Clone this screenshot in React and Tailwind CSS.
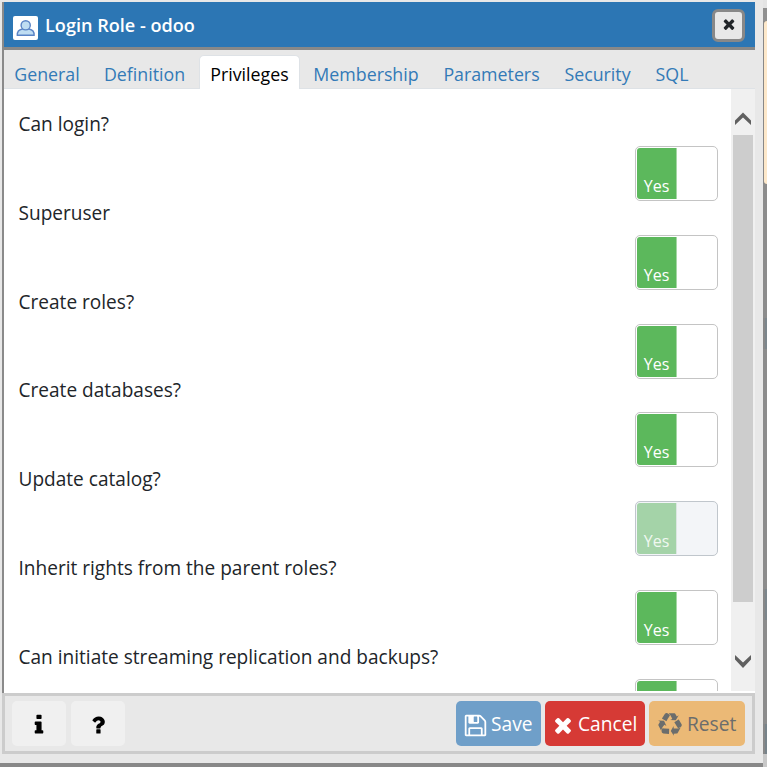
import React from "react";

const Glyph = ({ d, className }) => (
  <svg viewBox="0 0 1792 1792" fill="currentColor" className={"shrink-0 " + className}>
    <path d={d} />
  </svg>
);

const SAVE =
  "M512 1536h768v-384h-768v384zm896 0h128v-896q0-14-10-38.5t-20-34.5l-281-281q-10-10-34-20t-39-10v416q0 40-28 68t-68 28h-576q-40 0-68-28t-28-68v-416h-128v1280h128v-416q0-40 28-68t68-28h832q40 0 68 28t28 68v416zm-384-928v-320q0-13-9.5-22.5t-22.5-9.5h-192q-13 0-22.5 9.5t-9.5 22.5v320q0 13 9.5 22.5t22.5 9.5h192q13 0 22.5-9.5t9.5-22.5zm640 32v928q0 40-28 68t-68 28h-1344q-40 0-68-28t-28-68v-1344q0-40 28-68t68-28h928q40 0 88 20t76 48l280 280q28 28 48 76t20 88z";
const TIMES =
  "M1490 1322q0 40-28 68l-136 136q-28 28-68 28t-68-28l-294-294-294 294q-28 28-68 28t-68-28l-136-136q-28-28-28-68t28-68l294-294-294-294q-28-28-28-68t28-68l136-136q28-28 68-28t68 28l294 294 294-294q28-28 68-28t68 28l136 136q28 28 28 68t-28 68l-294 294 294 294q28 28 28 68z";
const INFO =
  "M1216 1344v128q0 26-19 45t-45 19h-512q-26 0-45-19t-19-45v-128q0-26 19-45t45-19h64v-384h-64q-26 0-45-19t-19-45v-128q0-26 19-45t45-19h384q26 0 45 19t19 45v576h64q26 0 45 19t19 45zm-128-1152v192q0 26-19 45t-45 19h-256q-26 0-45-19t-19-45v-192q0-26 19-45t45-19h256q26 0 45 19t19 45z";
const QUESTION =
  "M1088 1256v240q0 16-12 28t-28 12h-240q-16 0-28-12t-12-28v-240q0-16 12-28t28-12h240q16 0 28 12t12 28zm316-600q0 54-15.5 101t-35 76.5-55 59.5-57.5 43.5-61 35.5q-41 23-68.5 65t-27.5 67q0 17-12 32.5t-28 15.5h-240q-15 0-25.5-18.5t-10.5-37.5v-45q0-83 65-156.5t143-108.5q59-27 84-56t25-76q0-42-46.5-74t-107.5-32q-65 0-108 29-35 25-107 115-13 16-31 16-12 0-25-8l-164-125q-13-10-15.5-25t5.5-28q160-266 464-266 80 0 161 31t146 83 106 127.5 41 158.5z";
const RECYCLE =
  "M836 1169l-15 368-2 22-420-29q-36-3-67-31.5t-47-65.5q-11-27-14.5-55t4-65 12-55 21.5-64 19-53q78 12 509 28zm-387-586l180 379-147-92q-63 72-111.5 144.5t-72.5 125-39.500 94.500-18.500 63l-4 21-190-357q-17-26-18-56t6-47l8-18q35-63 114-188l-140-86zm1231 517l-188 359q-12 29-36.500 46.500t-43.500 20.500l-18 4q-71 7-219 12l8 164-230-367 211-362 7 173q170 16 283 5t170-33zm-785-924q-47 63-265 435l-317-187-19-12 225-356q20-31 60-45t80-10q24 2 48.500 12t42 21 41.500 33 36 34.500 36 39.500 32 35zm655 307l212 363q18 37 12.500 76t-27.500 74q-13 20-33 37t-38 28-48.500 22-47 16-51.500 14-46 12q-34-72-265-436l313-195zm-143-226l142-83-220 373-419-20 151-86q-34-89-75-166t-75.500-123.500-64.500-80-47-46.500l-17-13 405 1q31-3 58 10.500t39 28.500l11 15q39 61 112 190z";

const tabs = [
  { name: "General", width: "w-[86px]" },
  { name: "Definition", width: "w-[109px]" },
  { name: "Privileges", width: "w-[101px]" },
  { name: "Membership", width: "w-[132px]" },
  { name: "Parameters", width: "w-[119px]" },
  { name: "Security", width: "w-[93px]" },
  { name: "SQL", width: "w-[56px]" },
];

const rows = [
  { label: "Can login?", text: "Yes" },
  { label: "Superuser", text: "Yes" },
  { label: "Create roles?", text: "Yes" },
  { label: "Create databases?", text: "Yes" },
  { label: "Update catalog?", text: "Yes", disabled: true },
  { label: "Inherit rights from the parent roles?", text: "Yes" },
  { label: "Can initiate streaming replication and backups?" },
];

function Toggle({ disabled, text }) {
  return (
    <div
      className={
        "ml-auto flex h-[55px] w-[83px] shrink-0 overflow-hidden rounded-[5px] border p-px " +
        (disabled ? "border-[#c0c6cc] bg-[#f3f5f8]" : "border-[#c4c4c4] bg-white")
      }
    >
      <div
        className={
          "flex w-10 items-end justify-center rounded-l-[3px] border-r pb-px text-[16px] leading-[24px] " +
          (disabled
            ? "border-[#dce6e2] bg-[#a4d3a8] text-[#f0f8f1]"
            : "border-[#a5d6a5] bg-[#5cb85c] text-white")
        }
      >
        {text}
      </div>
    </div>
  );
}

export default function App() {
  return (
    <div className="flex h-[767px] w-[767px] overflow-hidden bg-[#888] font-['Open_Sans','Noto_Sans',sans-serif] text-[17.8px]">
      <div className="flex w-[763px] shrink-0 flex-col">
        <div className="h-[763px] bg-[#e8e8e8] pt-[2px] pl-[2px]">
          <div className="flex h-[691px] w-[753px] flex-col border-l-2 border-[#8a8a8a]">
            <header className="flex h-[48px] shrink-0 items-center border-b-3 border-[#888] bg-[#2c76b4] pr-[10px] pl-[9px]">
              <svg viewBox="0 0 25 24" className="mt-[7px] h-6 w-[25px]">
                <rect width="25" height="24" rx="2" fill="#fff" />
                <path d="M4.300 19.300c-.2-3.400 1.500-5.600 5-6.300h6.800c3.500.7 5.200 2.900 5 6.300z" fill="#bfddf2" stroke="#5a84c6" strokeWidth="1.400" />
                <circle cx="12.700" cy="9.300" r="4.600" fill="#bfddf2" stroke="#5a84c6" strokeWidth="1.400" />
              </svg>
              <h1 className="ml-[7px] text-[18.1px] leading-6 font-semibold text-white">Login Role - odoo</h1>
              <button className="ml-auto mt-[2px] flex h-[33px] w-[33px] items-center justify-center rounded-[6px] border-3 border-[#888] bg-[#e8e8e8] text-[#212529]">
                <Glyph d={TIMES} className="mb-[3px] ml-px h-[16px] w-[16px]" />
              </button>
            </header>

            <nav className="flex h-[39px] shrink-0 bg-[#e8e8e8]">
              {tabs.map((t) => {
                const active = t.name === "Privileges";
                return (
                  <div
                    key={t.name}
                    className={
                      "flex shrink-0 justify-center " +
                      t.width +
                      (active
                        ? " mt-[5px] rounded-t-[5px] border border-b-0 border-[#dee2e6] bg-white pt-[6px] text-black"
                        : " border-b border-[#dee2e6] pt-3 text-[#337ab7]")
                    }
                  >
                    <span className="leading-6">{t.name}</span>
                  </div>
                );
              })}
              <div className="flex-1 border-b border-[#dee2e6]" />
            </nav>

            <div className="flex h-[604px] shrink-0 bg-white">
              <div className="h-[602px] w-[727px] overflow-hidden pt-[22px] pr-[13px] pl-[14.5px] text-[19.07px] text-[#212529]">
                {rows.map((r) => (
                  <div key={r.label} className="flex h-[88.83px] flex-col">
                    <div className="mb-[11px] h-6 shrink-0 leading-[27px]">{r.label}</div>
                    <Toggle disabled={r.disabled} text={r.text} />
                  </div>
                ))}
              </div>
              <div className="flex h-[602px] w-[24px] flex-col items-center bg-[#f0f0f0]">
                <svg viewBox="0 0 24 46" className="h-[46px] w-6 shrink-0">
                  <path d="M4 31.500L12 23.500L20 31.500V36L12 28.500L4 36Z" fill="#606060" />
                </svg>
                <div className="h-[467px] w-5 shrink-0 bg-[#cdcdcd]" />
                <svg viewBox="0 0 24 89" className="h-[89px] w-6 shrink-0">
                  <path d="M4 53L12 60.500L20 53V57.500L12 66L4 57.500Z" fill="#606060" />
                </svg>
              </div>
            </div>
          </div>

          <footer className="flex h-[61px] w-[753px] items-start border-3 border-[#ccc] bg-[#e8e8e8] pt-[5px] pr-[7px] pl-[7px]">
            <button className="flex h-[45px] w-[54px] items-center justify-center rounded-[5px] bg-[#f0f0f0] text-black">
              <Glyph d={INFO} className="mt-[2px] h-6 w-6" />
            </button>
            <button className="ml-[5px] flex h-[45px] w-[54px] items-center justify-center rounded-[5px] bg-[#f0f0f0] text-black">
              <Glyph d={QUESTION} className="mt-[3px] h-6 w-6" />
            </button>
            <button className="ml-auto flex h-[45px] w-[85px] items-center rounded-[5px] bg-[#6f9fc9] pl-[7px] text-[19.2px] text-white">
              <Glyph d={SAVE} className="mt-[3px] h-[25px] w-[25px]" />
              <span className="mt-[2px] ml-[3px]">Save</span>
            </button>
            <button className="ml-1 flex h-[45px] w-[100px] items-center rounded-[5px] bg-[#d63a35] pl-[6px] text-[19.2px] text-white">
              <Glyph d={TIMES} className="mt-[3px] h-6 w-6" />
              <span className="mt-[2px] ml-[3px]">Cancel</span>
            </button>
            <button className="ml-1 flex h-[45px] w-[96px] items-center rounded-[5px] bg-[#ebb976] pl-[9px] text-[19.2px] text-[#6b6d6c]">
              <Glyph d={RECYCLE} className="mt-[2px] h-[24px] w-[24px]" />
              <span className="mt-[2px] ml-[5px]">Reset</span>
            </button>
          </footer>
        </div>
      </div>

      <aside className="flex w-1 flex-col">
        <div className="h-2 bg-[#e4e4e4]" />
        <div className="h-[13px] bg-[#909090]" />
        <div className="ml-px h-[163px] rounded-l-[3px] bg-[#fde8ca]" />
        <div className="h-[134px] bg-[#8c8c8c]" />
        <div className="ml-[2px] h-[31px] bg-[#7c868c]" />
        <div className="h-[240px] bg-[#8c8c8c]" />
        <div className="ml-[2px] h-[31px] bg-[#7c868c]" />
        <div className="h-[104px] bg-[#8c8c8c]" />
        <div className="ml-[2px] h-[30px] bg-[#77838a]" />
        <div className="flex-1 bg-[#c8c8c8]" />
      </aside>
    </div>
  );
}
